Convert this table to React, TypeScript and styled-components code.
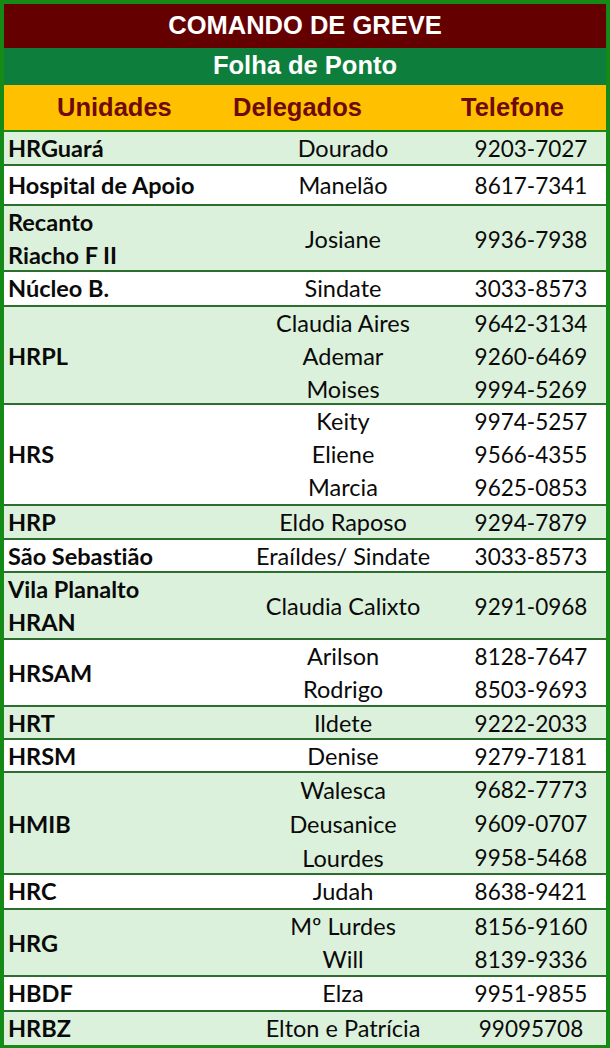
import React from "react";
import styled, { createGlobalStyle } from "styled-components";

const Global = createGlobalStyle`
  html, body { margin: 0; padding: 0; background: #ffffff; }
  * { box-sizing: border-box; }
`;

type Entry = { name: string; phone: string };
type Unit = { unit: string[]; people: Entry[]; h: number; lh?: number };

const data: Unit[] = [
  { unit: ["HRGuará"], people: [{ name: "Dourado", phone: "9203-7027" }], h: 34 },
  { unit: ["Hospital de Apoio"], people: [{ name: "Manelão", phone: "8617-7341" }], h: 40 },
  { unit: ["Recanto", "Riacho F II"], people: [{ name: "Josiane", phone: "9936-7938" }], h: 66 },
  { unit: ["Núcleo B."], people: [{ name: "Sindate", phone: "3033-8573" }], h: 35 },
  {
    unit: ["HRPL"],
    people: [
      { name: "Claudia Aires", phone: "9642-3134" },
      { name: "Ademar", phone: "9260-6469" },
      { name: "Moises", phone: "9994-5269" },
    ],
    h: 98,
  },
  {
    unit: ["HRS"],
    people: [
      { name: "Keity", phone: "9974-5257" },
      { name: "Eliene", phone: "9566-4355" },
      { name: "Marcia", phone: "9625-0853" },
    ],
    h: 101,
  },
  { unit: ["HRP"], people: [{ name: "Eldo Raposo", phone: "9294-7879" }], h: 34 },
  { unit: ["São Sebastião"], people: [{ name: "Eraíldes/ Sindate", phone: "3033-8573" }], h: 33 },
  { unit: ["Vila Planalto", "HRAN"], people: [{ name: "Claudia Calixto", phone: "9291-0968" }], h: 67 },
  {
    unit: ["HRSAM"],
    people: [
      { name: "Arilson", phone: "8128-7647" },
      { name: "Rodrigo", phone: "8503-9693" },
    ],
    h: 67,
  },
  { unit: ["HRT"], people: [{ name: "Ildete", phone: "9222-2033" }], h: 33 },
  { unit: ["HRSM"], people: [{ name: "Denise", phone: "9279-7181" }], h: 33 },
  {
    unit: ["HMIB"],
    people: [
      { name: "Walesca", phone: "9682-7773" },
      { name: "Deusanice", phone: "9609-0707" },
      { name: "Lourdes", phone: "9958-5468" },
    ],
    h: 102,
    lh: 34,
  },
  { unit: ["HRC"], people: [{ name: "Judah", phone: "8638-9421" }], h: 35 },
  {
    unit: ["HRG"],
    people: [
      { name: "Mº Lurdes", phone: "8156-9160" },
      { name: "Will", phone: "8139-9336" },
    ],
    h: 67,
  },
  { unit: ["HBDF"], people: [{ name: "Elza", phone: "9951-9855" }], h: 35 },
  { unit: ["HRBZ"], people: [{ name: "Elton e Patrícia", phone: "99095708" }], h: 33 },
];

const Frame = styled.div`
  width: 610px;
  height: 1048px;
  background: #168a16;
  padding: 4px 4px 3px 4px;
  display: flex;
  flex-direction: column;
  overflow: hidden;
`;

const Title = styled.div`
  height: 44px;
  padding-bottom: 2px;
  background: #650000;
  color: #ffffff;
  font-family: "Liberation Sans", Arial, sans-serif;
  font-weight: 700;
  font-size: 25.5px;
  display: flex;
  align-items: center;
  justify-content: center;
`;

const SubTitle = styled.div`
  height: 37px;
  padding-bottom: 2px;
  background: #0d7e3c;
  color: #ffffff;
  font-family: "Liberation Sans", Arial, sans-serif;
  font-weight: 700;
  font-size: 25.5px;
  display: flex;
  align-items: center;
  justify-content: center;
`;

const HeaderRow = styled.div`
  height: 45px;
  margin-bottom: 2px;
  background: #ffc000;
  color: #6e0a0a;
  font-family: "Liberation Sans", Arial, sans-serif;
  font-weight: 700;
  font-size: 25.5px;
  display: grid;
  grid-template-columns: 176px 228px 1fr;
  align-items: center;
  padding-left: 53px;
`;

const Body = styled.div`
  display: flex;
  flex-direction: column;
  flex: 1;
`;

const Row = styled.div<{ $h: number; $alt: boolean; $last: boolean }>`
  height: ${(p) => p.$h}px;
  background: ${(p) => (p.$alt ? "#dcf1dc" : "#ffffff")};
  border-bottom: ${(p) => (p.$last ? "none" : "2px solid #2c6f2c")};
  display: grid;
  grid-template-columns: 226px 226px 1fr;
  font-family: Lato, "Open Sans", sans-serif;
  font-size: 23.5px;
  font-variant-ligatures: none;
  font-feature-settings: "liga" 0, "clig" 0;
  color: #0a0a0a;
`;

const UnitCell = styled.div`
  display: flex;
  flex-direction: column;
  justify-content: center;
  padding-left: 4px;
  font-weight: 700;
  line-height: 33px;
  white-space: nowrap;
`;

const Col = styled.div<{ $lh: number; $phone?: boolean }>`
  display: flex;
  flex-direction: column;
  justify-content: center;
  align-items: center;
  line-height: ${(p) => p.$lh}px;
  font-size: ${(p) => (p.$phone ? "22.5px" : "23.5px")};
  white-space: nowrap;
`;

export default function App() {
  return (
    <>
      <Global />
      <Frame>
        <Title>COMANDO DE GREVE</Title>
        <SubTitle>Folha de Ponto</SubTitle>
        <HeaderRow>
          <span>Unidades</span>
          <span>Delegados</span>
          <span>Telefone</span>
        </HeaderRow>
        <Body>
          {data.map((u, i) => (
            <Row key={i} $h={u.h} $alt={i % 2 === 0} $last={i === data.length - 1}>
              <UnitCell>
                {u.unit.map((t) => (
                  <span key={t}>{t}</span>
                ))}
              </UnitCell>
              <Col $lh={u.lh ?? 33}>
                {u.people.map((p) => (
                  <span key={p.name}>{p.name}</span>
                ))}
              </Col>
              <Col $lh={u.lh ?? 33} $phone>
                {u.people.map((p) => (
                  <span key={p.name}>{p.phone}</span>
                ))}
              </Col>
            </Row>
          ))}
        </Body>
      </Frame>
    </>
  );
}
